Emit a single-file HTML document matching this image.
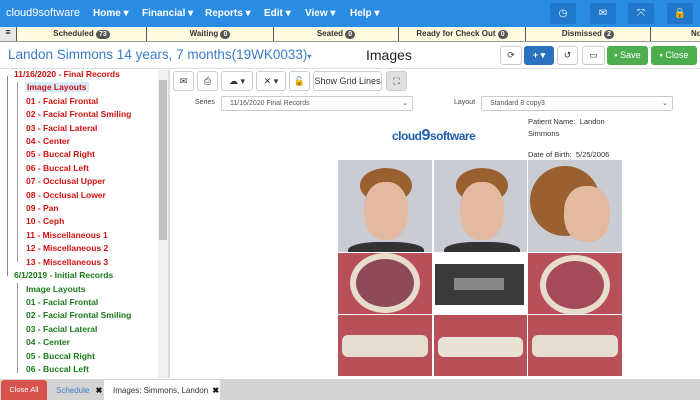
<!DOCTYPE html>
<html><head><style>
*{box-sizing:border-box;margin:0;padding:0}
body{width:700px;height:400px;overflow:hidden;background:#fff;font-family:"Liberation Sans",sans-serif;position:relative}
.a{position:absolute}
.nav{left:0;top:0;width:700px;height:27px;background:#2a8be3}
.nav span{position:absolute;top:8px;color:#fff;font-size:10px;font-weight:bold}
.nb{top:3px;width:26px;height:21px;background:#1f78cc;border-radius:2px;color:#fff;font-size:10px;text-align:center;line-height:21px}
.yb{left:0;top:27px;width:700px;height:15px;background:#fffbe0;border-bottom:1px solid #999}
.seg{position:absolute;top:0;height:14px;border-left:1px solid #555;font-size:8px;font-weight:bold;color:#333;text-align:center;line-height:14px}
.bd{display:inline-block;background:#555;color:#fff;border-radius:5px;padding:0 3px;font-size:7px;line-height:9px}
.tr{font-size:8.5px;font-weight:bold;position:absolute;left:26px}
.r{color:#d01010}.g{color:#1a7a1a}
.tb{top:71px;height:20px;border:1px solid #ccc;border-radius:3px;background:#fff;font-size:9px;text-align:center;line-height:18px;color:#333}
.sel{height:15px;border:1px solid #ccc;border-radius:2px;font-size:7px;color:#555;line-height:13px;padding-left:8px}
.btn{top:46px;height:19px;border:1px solid #ccc;border-radius:3px;background:#fff;font-size:9px;text-align:center;line-height:17px;color:#333}
.face{background:#c9ccd2;overflow:hidden}
.teeth{background:#b8505a;overflow:hidden}
</style></head><body>
<div class="a nav">
<span style="left:6px;font-weight:normal;font-size:11px;top:7px">cloud9software</span>
<span style="left:93px">Home ▾</span><span style="left:142px">Financial ▾</span><span style="left:205px">Reports ▾</span><span style="left:264px">Edit ▾</span><span style="left:305px">View ▾</span><span style="left:350px">Help ▾</span>
<div class="a nb" style="left:550px">◷</div><div class="a nb" style="left:590px">✉</div><div class="a nb" style="left:628px">⤧</div><div class="a nb" style="left:667px">🔒</div>
</div>
<div class="a yb">
<div class="a" style="left:0;top:0;width:16px;height:14px;background:#e6e6e6;font-size:9px;text-align:center">≡</div>
<div class="seg" style="left:16px;width:130px">Scheduled <span class="bd">73</span></div>
<div class="seg" style="left:146px;width:127px">Waiting <span class="bd">0</span></div>
<div class="seg" style="left:273px;width:125px">Seated <span class="bd">0</span></div>
<div class="seg" style="left:398px;width:127px">Ready for Check Out <span class="bd">0</span></div>
<div class="seg" style="left:525px;width:125px">Dismissed <span class="bd">2</span></div>
<div class="seg" style="left:650px;width:60px;text-align:left;padding-left:40px">No</div>
</div>
<div class="a" style="left:8px;top:47px;font-size:13.5px;color:#3a7bc8">Landon Simmons 14 years, 7 months(19WK0033)<span style="font-size:8px">▾</span></div>
<div class="a" style="left:366px;top:47px;font-size:14px;color:#222">Images</div>
<div class="a btn" style="left:500px;width:22px">⟳</div>
<div class="a btn" style="left:524px;width:30px;background:#2a72c0;color:#fff;border-color:#2a72c0;font-weight:bold">+ ▾</div>
<div class="a btn" style="left:557px;width:21px">↺</div>
<div class="a btn" style="left:582px;width:23px">▭</div>
<div class="a btn" style="left:607px;width:41px;background:#4cae4c;border-color:#4cae4c;color:#fff">▪ Save</div>
<div class="a btn" style="left:651px;width:46px;background:#4cae4c;border-color:#4cae4c;color:#fff">▪ Close</div>
<div class="a" style="left:0;top:68px;width:700px;height:1px;background:#ddd"></div>
<!-- tree -->
<div class="a" style="left:7px;top:76px;width:1px;height:200px;background:#888"></div>
<div class="a" style="left:17px;top:82px;width:1px;height:180px;background:#999"></div>
<div class="a" style="left:17px;top:283px;width:1px;height:90px;background:#999"></div>
<div class="tr r" style="left:14px;top:69px">11/16/2020 - Final Records</div>
<div class="tr r" style="top:82px;background:#d6eaf8;padding:0 2px;left:25px">Image Layouts</div>
<div class="tr r" style="top:96px">01 - Facial Frontal</div>
<div class="tr r" style="top:109px">02 - Facial Frontal Smiling</div>
<div class="tr r" style="top:123px">03 - Facial Lateral</div>
<div class="tr r" style="top:136px">04 - Center</div>
<div class="tr r" style="top:149px">05 - Buccal Right</div>
<div class="tr r" style="top:163px">06 - Buccal Left</div>
<div class="tr r" style="top:176px">07 - Occlusal Upper</div>
<div class="tr r" style="top:190px">08 - Occlusal Lower</div>
<div class="tr r" style="top:203px">09 - Pan</div>
<div class="tr r" style="top:216px">10 - Ceph</div>
<div class="tr r" style="top:230px">11 - Miscellaneous 1</div>
<div class="tr r" style="top:243px">12 - Miscellaneous 2</div>
<div class="tr r" style="top:257px">13 - Miscellaneous 3</div>
<div class="tr g" style="left:14px;top:270px">6/1/2019 - Initial Records</div>
<div class="tr g" style="top:284px">Image Layouts</div>
<div class="tr g" style="top:297px">01 - Facial Frontal</div>
<div class="tr g" style="top:310px">02 - Facial Frontal Smiling</div>
<div class="tr g" style="top:324px">03 - Facial Lateral</div>
<div class="tr g" style="top:337px">04 - Center</div>
<div class="tr g" style="top:351px">05 - Buccal Right</div>
<div class="tr g" style="top:364px">06 - Buccal Left</div>
<div class="a" style="left:158px;top:70px;width:10px;height:308px;background:#f0f0f0"></div>
<div class="a" style="left:159px;top:80px;width:8px;height:160px;background:#c1c1c1"></div>
<div class="a" style="left:168px;top:70px;width:2px;height:308px;background:#ddd"></div>
<!-- toolbar -->
<div class="a tb" style="left:173px;width:21px">✉</div>
<div class="a tb" style="left:197px;width:21px">⎙</div>
<div class="a tb" style="left:221px;width:32px">☁ ▾</div>
<div class="a tb" style="left:256px;width:30px">✕ ▾</div>
<div class="a tb" style="left:289px;width:21px">🔓</div>
<div class="a tb" style="left:313px;width:69px">Show Grid Lines</div>
<div class="a tb" style="left:386px;width:21px;background:#e0e0e0">⛶</div>
<div class="a" style="left:195px;top:99px;font-size:7px;color:#444">Series</div>
<div class="a sel" style="left:221px;top:96px;width:192px">11/16/2020 Final Records<span style="float:right;padding-right:4px">⌄</span></div>
<div class="a" style="left:454px;top:99px;font-size:7px;color:#444">Layout</div>
<div class="a sel" style="left:481px;top:96px;width:192px">Standard 8 copy3<span style="float:right;padding-right:4px">⌄</span></div>
<div class="a" style="left:392px;top:127px;font-size:12px;color:#1f5ea8;font-weight:bold;letter-spacing:-0.5px">cloud<span style="font-size:16px">9</span>software</div>
<div class="a" style="left:528px;top:116px;font-size:7.5px;color:#333;line-height:11.5px">Patient Name:&nbsp; Landon<br>Simmons</div>
<div class="a" style="left:528px;top:150px;font-size:7.5px;color:#333">Date of Birth:&nbsp; 5/25/2006</div>
<!-- images -->
<div class="a face" style="left:338px;top:160px;width:94px;height:92px"><div class="a" style="left:22px;top:8px;width:52px;height:35px;border-radius:50%;background:#9a6030"></div><div class="a" style="left:26px;top:22px;width:44px;height:58px;border-radius:45%;background:#e3b9a0"></div><div class="a" style="left:10px;top:82px;width:76px;height:20px;background:#333;border-radius:40% 40% 0 0"></div></div>
<div class="a face" style="left:434px;top:160px;width:93px;height:92px"><div class="a" style="left:22px;top:8px;width:52px;height:35px;border-radius:50%;background:#9a6030"></div><div class="a" style="left:26px;top:22px;width:44px;height:58px;border-radius:45%;background:#e3b9a0"></div><div class="a" style="left:10px;top:82px;width:76px;height:20px;background:#333;border-radius:40% 40% 0 0"></div></div>
<div class="a face" style="left:528px;top:160px;width:94px;height:92px"><div class="a" style="left:2px;top:6px;width:70px;height:70px;border-radius:50%;background:#9a6030"></div><div class="a" style="left:36px;top:26px;width:46px;height:56px;border-radius:45%;background:#e3b9a0"></div></div>
<div class="a teeth" style="left:338px;top:253px;width:94px;height:61px"><div class="a" style="left:18px;top:6px;width:58px;height:48px;border-radius:50%;background:#8e4a5a;box-shadow:0 0 0 6px #e8dccc"></div></div>
<div class="a" style="left:434px;top:253px;width:93px;height:61px;background:#fff"><div class="a" style="left:1px;top:11px;width:89px;height:41px;background:#3a3a3a"></div><div class="a" style="left:20px;top:25px;width:50px;height:12px;background:#888"></div></div>
<div class="a teeth" style="left:528px;top:253px;width:94px;height:61px"><div class="a" style="left:18px;top:8px;width:58px;height:48px;border-radius:50%;background:#a44a5a;box-shadow:0 0 0 6px #e8dccc"></div></div>
<div class="a teeth" style="left:338px;top:315px;width:94px;height:61px"><div class="a" style="left:4px;top:20px;width:86px;height:22px;background:#e4ddd0;border-radius:6px"></div></div>
<div class="a teeth" style="left:434px;top:315px;width:93px;height:61px"><div class="a" style="left:4px;top:22px;width:85px;height:20px;background:#e8e2d6;border-radius:6px"></div></div>
<div class="a teeth" style="left:528px;top:315px;width:94px;height:61px"><div class="a" style="left:4px;top:20px;width:86px;height:22px;background:#e4ddd0;border-radius:6px"></div></div>
<!-- bottom -->
<div class="a" style="left:0;top:379px;width:700px;height:21px;background:#d4d4d4"></div>
<div class="a" style="left:1px;top:380px;width:46px;height:20px;background:#d9534f;border-radius:3px 3px 0 0;color:#fff;font-size:7.5px;text-align:center;line-height:20px">Close All</div>
<div class="a" style="left:56px;top:386px;font-size:8px;color:#3a7bc8;white-space:nowrap">Schedule <b style="color:#111;margin-left:4px">✖</b></div>
<div class="a" style="left:104px;top:380px;width:116px;height:20px;background:#fff;font-size:8px;color:#333;padding:6px 0 0 9px;white-space:nowrap">Images: Simmons, Landon <b style="color:#111;margin-left:2px">✖</b></div>
</body></html>
